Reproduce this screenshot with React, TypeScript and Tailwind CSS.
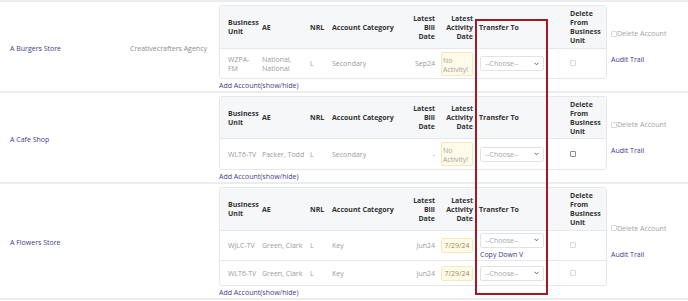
import React from 'react';

type Account = {
  unit: string;
  ae: string;
  nrl: string;
  category: string;
  bill: string;
  activity: string;
  noActivity?: boolean;
  copyDown?: boolean;
  fadedCheck?: boolean;
  wrapText?: boolean;
  height: string;
};

type Store = {
  name: string;
  agency?: string;
  headerH: string;
  rows: Account[];
};

const stores: Store[] = [
  {
    name: 'A Burgers Store',
    agency: 'Creativecrafters Agency',
    headerH: 'h-[42px]',
    rows: [
      {
        unit: 'WZPA-FM',
        ae: 'National, National',
        nrl: 'L',
        category: 'Secondary',
        bill: 'Sep24',
        activity: '',
        noActivity: true,
        fadedCheck: true,
        wrapText: true,
        height: 'h-[30px]',
      },
    ],
  },
  {
    name: 'A Cafe Shop',
    headerH: 'h-[41px]',
    rows: [
      {
        unit: 'WLT6-TV',
        ae: 'Packer, Todd',
        nrl: 'L',
        category: 'Secondary',
        bill: '-',
        activity: '',
        noActivity: true,
        height: 'h-[31px]',
      },
    ],
  },
  {
    name: 'A Flowers Store',
    headerH: 'h-[42px]',
    rows: [
      {
        unit: 'WJLC-TV',
        ae: 'Green, Clark',
        nrl: 'L',
        category: 'Key',
        bill: 'Jun24',
        activity: '7/29/24',
        copyDown: true,
        fadedCheck: true,
        height: 'h-[30px]',
      },
      {
        unit: 'WLT6-TV',
        ae: 'Green, Clark',
        nrl: 'L',
        category: 'Key',
        bill: 'Jun24',
        activity: '7/29/24',
        fadedCheck: true,
        height: 'h-[25px]',
      },
    ],
  },
];

function Checkbox({ faded }: { faded?: boolean }) {
  return (
    <span
      className={`inline-block w-[6px] h-[6px] rounded-[1px] border bg-white ${
        faded ? 'border-[#d8d8d8]' : 'border-[#8a8a8a]'
      }`}
    />
  );
}

function ChooseSelect() {
  return (
    <div className="flex items-center justify-between w-[64px] h-[15px] pl-[4px] pr-[4px] bg-white border border-[#e2e2e2] rounded-[2px] text-[#a5a5a5]">
      <span>--Choose--</span>
      <svg width="5" height="4" viewBox="0 0 5 4" fill="none">
        <path d="M0.6 0.8 L2.5 2.8 L4.4 0.8" stroke="#555" strokeWidth="0.9" />
      </svg>
    </div>
  );
}

function AccountTable({ store }: { store: Store }) {
  const th = 'px-[4px] font-bold text-[#333] align-middle';
  const td = 'px-[4px] align-middle text-[#9a9a9a] border-t border-[#e6e7ea]';
  return (
    <table className="table-fixed w-[386px] border-separate border-spacing-0 border border-[#e6e7ea] rounded-[3px] overflow-hidden">
      <colgroup>
        <col className="w-[38px]" />
        <col className="w-[48px]" />
        <col className="w-[22px]" />
        <col className="w-[68px]" />
        <col className="w-[42px]" />
        <col className="w-[38px]" />
        <col className="w-[90px]" />
        <col className="w-[40px]" />
      </colgroup>
      <thead>
        <tr className={`bg-[#f6f7f9] ${store.headerH}`}>
          <th className={`${th} pl-[8px] text-left`}>Business<br />Unit</th>
          <th className={`${th} text-left`}>AE</th>
          <th className={`${th} text-left`}>NRL</th>
          <th className={`${th} text-left whitespace-nowrap`}>Account Category</th>
          <th className={`${th} pr-[3px] text-right`}>Latest<br />Bill<br />Date</th>
          <th className={`${th} pr-[3px] text-right`}>Latest<br />Activity<br />Date</th>
          <th className={`${th} pl-[3px] text-left`}>Transfer To</th>
          <th className={`${th} text-left`}>Delete<br />From<br />Business<br />Unit</th>
        </tr>
      </thead>
      <tbody>
        {store.rows.map((r, i) => (
          <tr key={i} className={r.height}>
            <td className={`${td} pl-[8px] ${r.wrapText ? '' : 'whitespace-nowrap'}`}>{r.unit}</td>
            <td className={`${td} ${r.wrapText ? '' : 'whitespace-nowrap'}`}>{r.ae}</td>
            <td className={td}>{r.nrl}</td>
            <td className={`${td} font-medium text-[#3f3d8c]`}>{r.category}</td>
            <td className={`${td} pr-[3px] text-right font-medium text-[#3f3d8c]`}>{r.bill}</td>
            <td className="pl-[3px] pr-[3px] align-middle border-t border-[#e6e7ea]">
              {r.noActivity ? (
                <div className="h-[24px] pl-[1px] pt-[3px] bg-[#fffbe8] border border-[#f4e9b8] rounded-[2px] text-[#a3a3a3] leading-[9px]">
                  No Activity!
                </div>
              ) : (
                <div className="h-[15px] flex items-center justify-center bg-[#fffbe8] border border-[#f4e9b8] rounded-[2px] text-[#9b8c55]">
                  {r.activity}
                </div>
              )}
            </td>
            <td className="pl-[4px] align-middle border-t border-[#e6e7ea]">
              <ChooseSelect />
              {r.copyDown && <div className="mt-[2px] font-medium text-[#3f3d8c]">Copy Down V</div>}
            </td>
            <td className="pl-[4px] align-middle border-t border-[#e6e7ea]">
              <Checkbox faded={r.fadedCheck} />
            </td>
          </tr>
        ))}
      </tbody>
    </table>
  );
}

export default function App() {
  return (
    <div
      className="relative w-[688px] h-[301px] bg-white overflow-hidden text-[7px] leading-[9px]"
      style={{ fontFamily: '"Open Sans", "Noto Sans", sans-serif' }}
    >
      <div className="border-t-2 border-[#ececec]">
        {stores.map((s) => (
          <div key={s.name} className="flex border-b-2 border-[#ececec] pt-[3px]">
            <div className="w-[130px] pl-[10px] flex items-center font-medium text-[#3f3d8c]">{s.name}</div>
            <div className="w-[89px] flex items-center text-[#8c8c8c]">{s.agency}</div>
            <div className="w-[386px] flex flex-col">
              <AccountTable store={s} />
              <div className="h-[12px] flex items-center font-medium text-[#3f3d8c]">Add Account(show/hide)</div>
            </div>
            <div className="flex-1 pl-[6px] pb-[3px] flex flex-col justify-center gap-[17px]">
              <label className="flex items-center text-[#a3a3a3]">
                <Checkbox faded />
                <span>Delete Account</span>
              </label>
              <div className="text-[#3f3d8c] font-medium">Audit Trail</div>
            </div>
          </div>
        ))}
      </div>
      {/* highlight box drawn over the Transfer To column */}
      <div className="absolute left-[475px] top-[19px] w-[73px] h-[276px] border-2 border-[#a01b26] pointer-events-none" />
    </div>
  );
}
